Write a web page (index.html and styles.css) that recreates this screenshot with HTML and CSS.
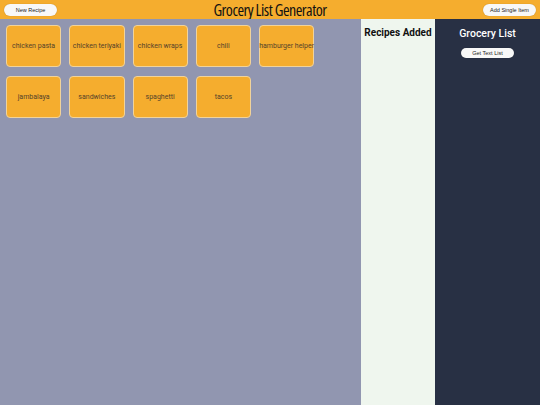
FILE: index.html
```html
<!DOCTYPE html>
<html>
<head>
<meta charset="utf-8">
<link rel="stylesheet" href="styles.css">
</head>
<body>
<header class="topbar">
  <button class="pill btn-left">New Recipe</button>
  <h1 class="title">Grocery List Generator</h1>
  <button class="pill btn-right">Add Single Item</button>
</header>
<main class="main">
  <section class="recipes">
    <div class="card">chicken pasta</div>
    <div class="card">chicken teriyaki</div>
    <div class="card">chicken wraps</div>
    <div class="card">chili</div>
    <div class="card">hamburger helper</div>
    <div class="card">jambalaya</div>
    <div class="card">sandwiches</div>
    <div class="card">spaghetti</div>
    <div class="card">tacos</div>
  </section>
  <aside class="added">
    <h2 class="added-title">Recipes Added</h2>
  </aside>
  <aside class="grocery">
    <h2 class="grocery-title">Grocery List</h2>
    <button class="pill btn-text">Get Text List</button>
  </aside>
</main>
</body>
</html>
```
FILE: styles.css
```css
* { box-sizing: border-box; }
html, body { margin: 0; padding: 0; }
body {
  width: 540px;
  height: 405px;
  overflow: hidden;
  font-family: Roboto, "Liberation Sans", sans-serif;
  display: flex;
  flex-direction: column;
}
.topbar {
  height: 19px;
  background: #f5ad2e;
  display: flex;
  align-items: center;
  justify-content: space-between;
  padding: 0 4px;
  flex: none;
}
.pill {
  background: #f8f8f8;
  border: none;
  border-radius: 6px;
  height: 12px;
  width: 53px;
  padding: 0;
  font-family: "Liberation Sans", Arial, sans-serif;
  font-size: 5.5px;
  color: #222;
  box-shadow: 0 0 1px rgba(0,0,0,0.3);
}
.title {
  margin: 0;
  font-family: "Open Sans", sans-serif;
  font-stretch: condensed;
  font-weight: 500;
  font-size: 16px;
  line-height: 1;
  color: #111;
  letter-spacing: -0.5px;
}
.main {
  flex: 1;
  display: flex;
}
.recipes {
  width: 361px;
  background: #9196b0;
  padding: 6px;
  display: flex;
  flex-wrap: wrap;
  align-content: flex-start;
  column-gap: 8px;
  row-gap: 9px;
}
.card {
  width: 55.25px;
  height: 42px;
  background: #f5ad2e;
  border: 1px solid #f1d39a;
  border-radius: 4px;
  display: flex;
  align-items: center;
  justify-content: center;
  font-size: 7px;
  color: #54432a;
  white-space: nowrap;
}
.added {
  width: 74px;
  background: #eff6ee;
  text-align: center;
}
.added-title {
  margin: 8px 0 0;
  font-size: 10px;
  font-weight: 700;
  color: #111;
}
.grocery {
  flex: 1;
  background: #283044;
  display: flex;
  flex-direction: column;
  align-items: center;
}
.grocery-title {
  margin: 8px 0 0;
  font-size: 10.5px;
  font-weight: 500;
  color: #fff;
}
.btn-text {
  margin-top: 8px;
  height: 10px;
  border-radius: 5px;
}
```
